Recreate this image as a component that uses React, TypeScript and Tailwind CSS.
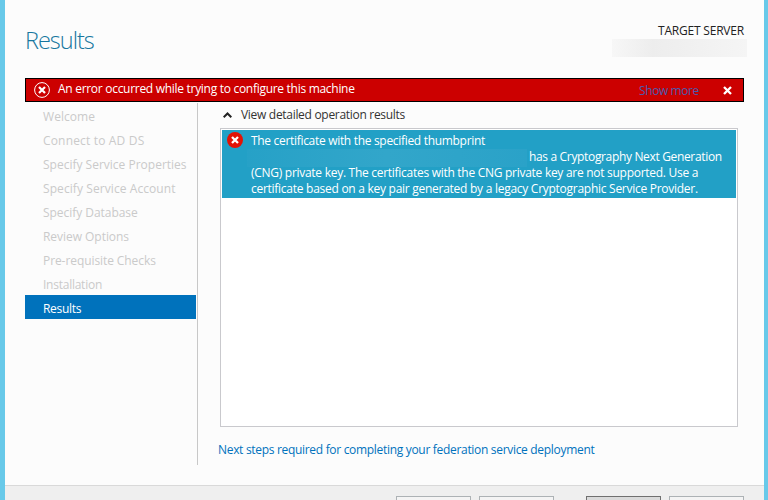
const steps = [
  { label: 'Welcome', tracking: 'tracking-[0.05px]' },
  { label: 'Connect to AD DS', tracking: 'tracking-[0.17px]' },
  { label: 'Specify Service Properties', tracking: 'tracking-[0px]' },
  { label: 'Specify Service Account', tracking: 'tracking-[0.08px]' },
  { label: 'Specify Database', tracking: 'tracking-[-0.04px]' },
  { label: 'Review Options', tracking: 'tracking-[-0.04px]' },
  { label: 'Pre-requisite Checks', tracking: 'tracking-[-0.08px]' },
  { label: 'Installation', tracking: 'tracking-[-0.25px]' },
  { label: 'Results', tracking: 'tracking-[-0.3px]' },
];

function Header() {
  return (
    <header className="flex h-[78px] shrink-0 justify-between pl-5 pr-[17px]">
      <h1 className="mt-[22px] h-9 text-[23.5px] leading-9 font-light tracking-[-1px] text-[#17779f]">Results</h1>
      <div className="mt-[22px] flex w-[135px] flex-col">
        <span className="mr-[3px] h-[17px] text-right leading-[17px] font-medium tracking-[-0.2px] text-[#222]">TARGET SERVER</span>
        <div className="h-[18px] bg-linear-to-r from-[#f7f7f7] via-[#ededed] via-30% to-[#f5f5f5]" />
      </div>
    </header>
  );
}

function ErrorBanner() {
  return (
    <div className="mr-5 ml-5 flex h-6 shrink-0 items-center border border-black bg-[#cc0000] pr-[11px] pl-2">
      <svg className="h-4 w-4 shrink-0" viewBox="0 0 16 16" fill="none" stroke="#fff">
        <circle cx="8" cy="8" r="7.4" strokeWidth="1" />
        <path d="M5 5l6 6M11 5l-6 6" strokeWidth="2.2" />
      </svg>
      <span className="mb-[2px] ml-2 text-white tracking-[-0.29px]">An error occurred while trying to configure this machine</span>
      <span className="mt-[2px] ml-auto w-[61px] text-[#4a5cae] tracking-[-0.4px]">Show more</span>
      <svg className="ml-[23px] h-[9px] w-[9px] shrink-0" viewBox="0 0 9 9" stroke="#fff" strokeWidth="2.3">
        <path d="M1 1l7 7M8 1l-7 7" />
      </svg>
    </div>
  );
}

function Sidebar() {
  return (
    <nav className="w-[171px] shrink-0 pt-px">
      {steps.map((step) => (
        <div
          key={step.label}
          className={`h-6 pl-[18px] leading-[28px] ${step.tracking} ${step.label === 'Results' ? 'bg-[#0072bc] text-white' : 'text-[#cacaca]'}`}
        >
          {step.label}
        </div>
      ))}
    </nav>
  );
}

function ResultPanel() {
  return (
    <section className="flex w-[541px] shrink-0 flex-col pl-[20px]">
      <div className="flex h-[26px] items-center pl-[5px] text-[#333]">
        <svg className="h-[6px] w-[9px] shrink-0" viewBox="0 0 9 6" fill="none" stroke="#222" strokeWidth="2">
          <path d="M.7 5.2L4.5 1.5L8.3 5.2" />
        </svg>
        <span className="ml-[9px] tracking-[-0.3px]">View detailed operation results</span>
      </div>
      <div className="ml-[2px] h-[299px] w-[518px] border border-[#c9c9cd] bg-white p-px">
        <div className="flex h-[68px] bg-[#22a0c6] pt-[3px] pl-[5px] text-white">
          <svg className="-mt-px h-4 w-4 shrink-0" viewBox="0 0 16 16">
            <circle cx="8" cy="8" r="8" fill="#e31205" />
            <path d="M5 5l6 6M11 5l-6 6" stroke="#fff" strokeWidth="2.3" />
          </svg>
          <div className="ml-2 leading-4">
            <div className="tracking-[-0.31px]">The certificate with the specified thumbprint</div>
            <div className="flex tracking-[-0.34px]">
              <span className="mr-[2px] -ml-1 h-[18px] w-[280px] shrink-0 bg-linear-to-r from-[#26a1c7] via-[#32a6ca] to-[#2aa2c8]" />
              <span className="h-4">has a Cryptography Next Generation</span>
            </div>
            <div className="-mt-[2px] tracking-[-0.28px]">(CNG) private key. The certificates with the CNG private key are not supported. Use a</div>
            <div className="tracking-[-0.27px]">certificate based on a key pair generated by a legacy Cryptographic Service Provider.</div>
          </div>
        </div>
      </div>
      <a className="mt-[13px] leading-5 text-[#0072bc] tracking-[-0.31px]">Next steps required for completing your federation service deployment</a>
    </section>
  );
}

export default function App() {
  return (
    <div className="h-[500px] w-[768px] overflow-hidden border-r-4 border-l-5 border-[#68c9e9] bg-[#fcfcfc] font-['Open_Sans','Noto_Sans',sans-serif] text-[12px] whitespace-nowrap">
      <div className="flex h-full flex-col">
        <Header />
        <ErrorBanner />
        <main className="flex h-[383px] shrink-0 pl-5">
          <Sidebar />
          <div className="mt-px ml-px h-[362px] w-px bg-[#c8c8c8]" />
          <ResultPanel />
        </main>
        <footer className="flex h-[15px] shrink-0 overflow-hidden border-t border-[#d9d9d9] bg-[#efefef] pt-[10px] pl-[391px]">
          <button className="h-6 w-[75px] shrink-0 border border-[#adb2b5] bg-[#f4f4f4]" />
          <button className="ml-2 h-6 w-[75px] shrink-0 border border-[#adb2b5] bg-[#f4f4f4]" />
          <button className="ml-8 h-6 w-[75px] shrink-0 border border-[#707070] bg-[#dadada]" />
          <button className="ml-2 h-6 w-[75px] shrink-0 border border-[#adb2b5] bg-[#f4f4f4]" />
        </footer>
      </div>
    </div>
  );
}
